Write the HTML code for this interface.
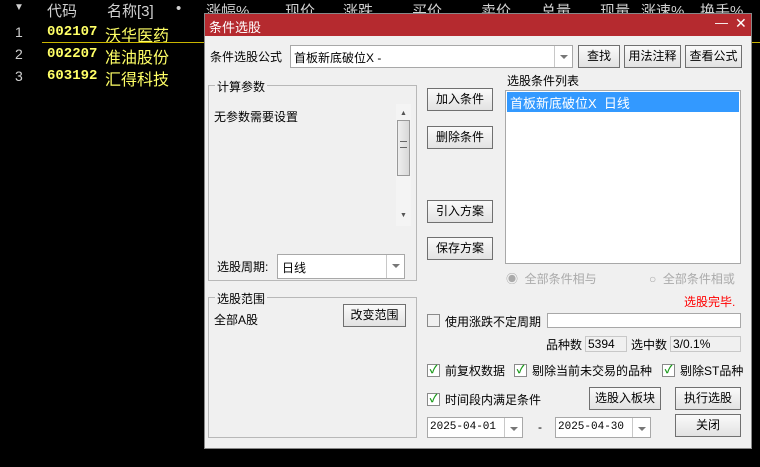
<!DOCTYPE html>
<html><head><meta charset="utf-8"><style>
*{margin:0;padding:0;box-sizing:border-box}
body{width:760px;height:467px;background:#000;position:relative;overflow:hidden;font-family:"Liberation Sans","Noto Sans CJK SC",sans-serif;font-size:12px;color:#000}
.a{position:absolute;white-space:nowrap}
.h{color:#d0d0d0;font-size:15px;top:0}
.c{color:#ffff66;font-size:14px;font-family:"Liberation Mono","Noto Sans CJK SC",monospace;font-weight:bold}
.n{color:#ffff66;font-size:16px}
.r{color:#d0d0d0;font-size:14px}
.btn{position:absolute;background:linear-gradient(#fafafa,#e2e2e2);border:1px solid #707070;text-align:center;font-size:12px;line-height:20px}
.box{position:absolute;background:#fff;border:1px solid #a8a8a8}
.dd{position:absolute;right:0;top:0;bottom:0;width:18px;border-left:1px solid #c8c8c8;background:#fff}
.dd:after{content:"";position:absolute;left:5px;top:9px;border:4px solid transparent;border-top:4px solid #777}
.grp{position:absolute;border:1px solid #b8b8b8}
.gl{position:absolute;top:-8px;left:6px;background:#f0f0f0;padding:0 2px}
.cb{position:absolute;width:13px;height:13px;border:1px solid #8a8a8a;background:#fff;font-size:11px;line-height:11px;color:#1a9a1a;text-align:center;font-weight:bold}
.in{position:absolute;background:#f0f0f0;border:1px solid #c8c8c8;padding-left:2px;line-height:15px}
</style></head><body>
<div class="a h" style="left:14px;top:2px;font-size:10px">▼</div>
<div class="a h" style="left:47px">代码</div>
<div class="a h" style="left:107px">名称[3]</div>
<div class="a h" style="left:176px">•</div>
<div class="a h" style="left:206px">涨幅%</div>
<div class="a h" style="left:285px">现价</div>
<div class="a h" style="left:343px">涨跌</div>
<div class="a h" style="left:412px">买价</div>
<div class="a h" style="left:481px">卖价</div>
<div class="a h" style="left:541px">总量</div>
<div class="a h" style="left:600px">现量</div>
<div class="a h" style="left:641px">涨速%</div>
<div class="a h" style="left:700px">换手%</div>
<div class="a r" style="left:15px;top:24px">1</div><div class="a c" style="left:47px;top:24px">002107</div><div class="a n" style="left:105px;top:22px">沃华医药</div>
<div class="a" style="left:42px;top:42px;width:718px;height:1px;background:#c8b400"></div>
<div class="a r" style="left:15px;top:46px">2</div><div class="a c" style="left:47px;top:46px">002207</div><div class="a n" style="left:105px;top:44px">准油股份</div>
<div class="a r" style="left:15px;top:68px">3</div><div class="a c" style="left:47px;top:68px">603192</div><div class="a n" style="left:105px;top:66px">汇得科技</div>

<div class="a" style="left:204px;top:13px;width:548px;height:436px;background:#f0f0f0;border:1px solid #888">
<div class="a" style="left:0;top:0;width:546px;height:22px;background:#b52a2f;color:#fff;font-size:13px;padding:3px 0 0 4px">条件选股<span style="position:absolute;left:510px;top:1px;font-size:13px">—</span><span style="position:absolute;left:530px;top:1px;font-size:14px">✕</span></div>
</div>
<div class="a" style="left:210px;top:48px">条件选股公式</div>
<div class="box" style="left:290px;top:45px;width:283px;height:23px;padding:3px 0 0 3px">首板新底破位X -<div class="dd"></div></div>
<div class="btn" style="left:578px;top:45px;width:42px;height:23px">查找</div>
<div class="btn" style="left:624px;top:45px;width:57px;height:23px">用法注释</div>
<div class="btn" style="left:685px;top:45px;width:57px;height:23px">查看公式</div>

<div class="grp" style="left:208px;top:85px;width:209px;height:196px"><div class="gl">计算参数</div></div>
<div class="a" style="left:214px;top:108px">无参数需要设置</div>
<div class="a" style="left:396px;top:104px;width:15px;height:122px;background:#f4f4f4"></div>
<div class="a" style="left:400px;top:110px;font-size:7px;color:#555">▲</div>
<div class="a" style="left:397px;top:120px;width:13px;height:56px;background:linear-gradient(90deg,#eee,#d8d8d8);border:1px solid #999"></div>
<div class="a" style="left:400px;top:141px;width:7px;height:7px;border-top:1px solid #666;border-bottom:1px solid #666"></div>
<div class="a" style="left:400px;top:212px;font-size:7px;color:#555">▼</div>
<div class="a" style="left:217px;top:258px">选股周期:</div>
<div class="box" style="left:277px;top:254px;width:128px;height:25px;padding:4px 0 0 4px">日线<div class="dd"></div></div>

<div class="grp" style="left:208px;top:297px;width:209px;height:141px"><div class="gl">选股范围</div></div>
<div class="a" style="left:214px;top:311px">全部A股</div>
<div class="btn" style="left:343px;top:304px;width:63px;height:23px">改变范围</div>

<div class="btn" style="left:427px;top:88px;width:66px;height:23px">加入条件</div>
<div class="btn" style="left:427px;top:126px;width:66px;height:23px">删除条件</div>
<div class="btn" style="left:427px;top:200px;width:66px;height:23px">引入方案</div>
<div class="btn" style="left:427px;top:237px;width:66px;height:23px">保存方案</div>

<div class="a" style="left:507px;top:72px">选股条件列表</div>
<div class="box" style="left:505px;top:90px;width:236px;height:174px"><div style="margin:1px;height:20px;background:#3399ff;color:#fff;font-size:13px;padding:1px 0 0 3px">首板新底破位X &nbsp;日线</div></div>
<div class="a" style="left:506px;top:270px;color:#aaa">◉ &nbsp;全部条件相与</div>
<div class="a" style="left:649px;top:270px;color:#aaa">○ &nbsp;全部条件相或</div>
<div class="a" style="left:684px;top:293px;color:#f00">选股完毕.</div>

<div class="cb" style="left:427px;top:314px;background:#f0f0f0"></div>
<div class="a" style="left:445px;top:313px">使用涨跌不定周期</div>
<div class="box" style="left:547px;top:313px;width:194px;height:15px"></div>
<div class="a" style="left:546px;top:336px">品种数</div><div class="in" style="left:585px;top:336px;width:42px;height:16px">5394</div>
<div class="a" style="left:631px;top:336px">选中数</div><div class="in" style="left:670px;top:336px;width:71px;height:16px">3/0.1%</div>

<div class="cb" style="left:427px;top:364px">✓</div><div class="a" style="left:445px;top:362px">前复权数据</div>
<div class="cb" style="left:514px;top:364px">✓</div><div class="a" style="left:532px;top:362px">剔除当前未交易的品种</div>
<div class="cb" style="left:662px;top:364px">✓</div><div class="a" style="left:680px;top:362px">剔除ST品种</div>
<div class="cb" style="left:427px;top:393px">✓</div><div class="a" style="left:445px;top:391px">时间段内满足条件</div>
<div class="btn" style="left:589px;top:387px;width:72px;height:23px">选股入板块</div>
<div class="btn" style="left:675px;top:387px;width:66px;height:23px">执行选股</div>
<div class="btn" style="left:675px;top:414px;width:66px;height:23px">关闭</div>
<div class="box" style="left:427px;top:417px;width:96px;height:21px;padding:3px 0 0 2px;font-family:'Liberation Mono',monospace;font-size:11px">2025-04-01<div class="dd"></div></div>
<div class="a" style="left:538px;top:420px">-</div>
<div class="box" style="left:555px;top:417px;width:96px;height:21px;padding:3px 0 0 2px;font-family:'Liberation Mono',monospace;font-size:11px">2025-04-30<div class="dd"></div></div>
</body></html>
